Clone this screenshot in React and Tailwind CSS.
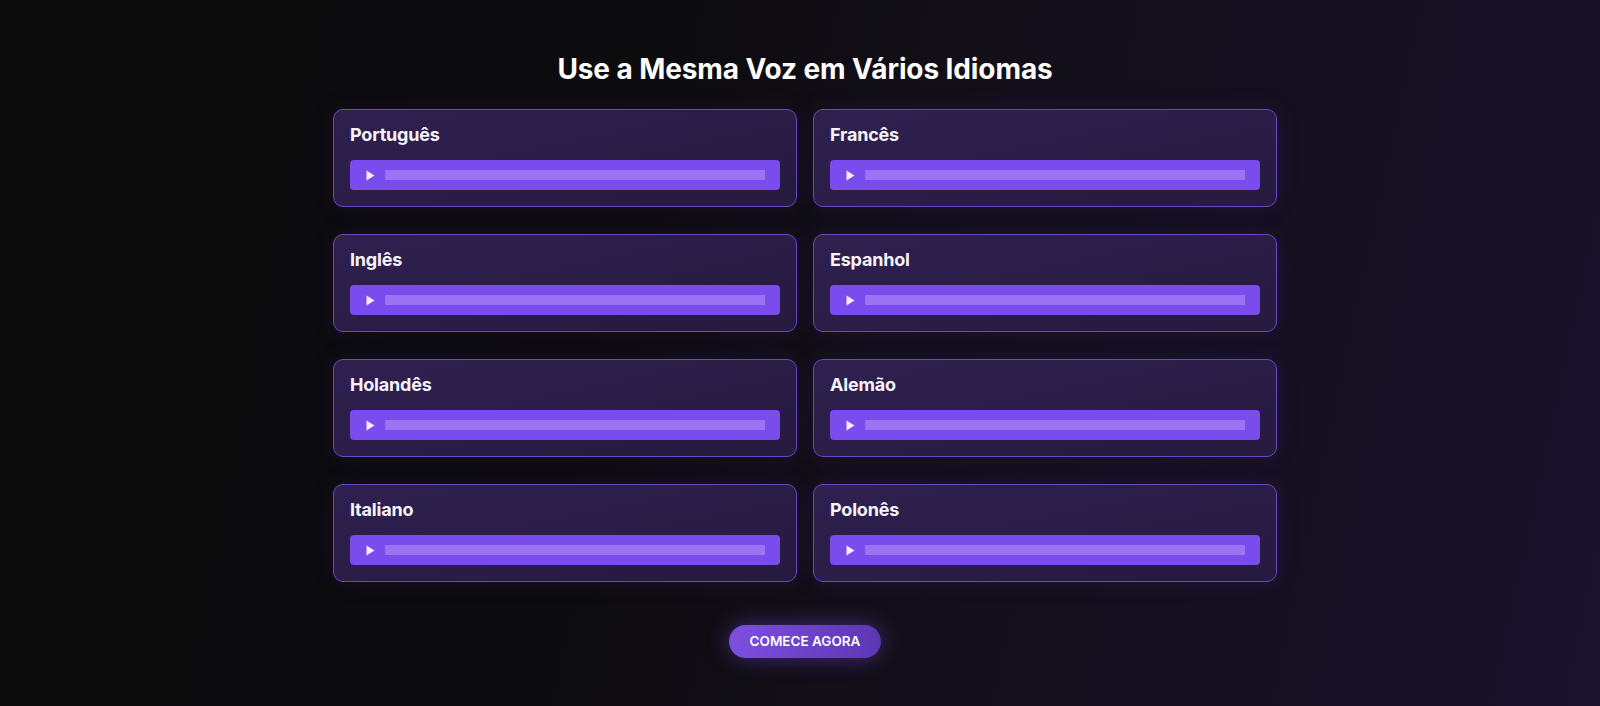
import React from "react";

const LANGUAGES = [
  "Português",
  "Francês",
  "Inglês",
  "Espanhol",
  "Holandês",
  "Alemão",
  "Italiano",
  "Polonês",
];

function AudioBar() {
  return (
    <div className="flex h-[30px] items-center rounded-[4px] bg-[#7b4ced] pl-4 pr-[15px]">
      <svg width="9" height="11" viewBox="0 0 9 11" className="shrink-0">
        <path d="M0.5 0.5 L8.5 5.5 L0.5 10.5 Z" fill="#f3ecff" />
      </svg>
      <div className="ml-[10px] h-[10px] flex-1 bg-[#9a74f2]" />
    </div>
  );
}

function LanguageCard({ name }) {
  return (
    <div className="h-[98px] rounded-[10px] border border-[#6b47c4] bg-gradient-to-br from-[#2f2050] to-[#261a3e] px-4 pb-4 pt-[15px] shadow-[0_0_24px_rgba(110,60,220,0.12)]">
      <h3 className="mb-[15px] text-[18px] font-bold leading-5 tracking-[-0.2px] text-[#f6f3fb]">
        {name}
      </h3>
      <AudioBar />
    </div>
  );
}

export default function App() {
  return (
    <div
      className="relative h-[706px] w-full overflow-hidden bg-[linear-gradient(102deg,#0b0b0c_0%,#0c0b0d_38%,#120f18_55%,#151020_75%,#1b122c_100%)] pl-[10px]"
      style={{ fontFamily: "Inter, 'Noto Sans', sans-serif" }}
    >
      <div className="flex flex-col items-center pt-[51px]">
        <h2 className="mb-[22px] text-[28px] font-bold leading-9 tracking-[-0.1px] text-white">
          Use a Mesma Voz em Vários Idiomas
        </h2>

        <div className="grid w-[944px] grid-cols-2 gap-x-4 gap-y-[27px]">
          {LANGUAGES.map((lang) => (
            <LanguageCard key={lang} name={lang} />
          ))}
        </div>

        <button className="mt-[43px] h-[33px] rounded-full bg-gradient-to-r from-[#7d4fe0] to-[#5d36b4] px-[21px] text-[13.5px] font-semibold uppercase text-white shadow-[0_0_22px_rgba(124,77,238,0.45)]">
          Comece Agora
        </button>
      </div>
    </div>
  );
}
